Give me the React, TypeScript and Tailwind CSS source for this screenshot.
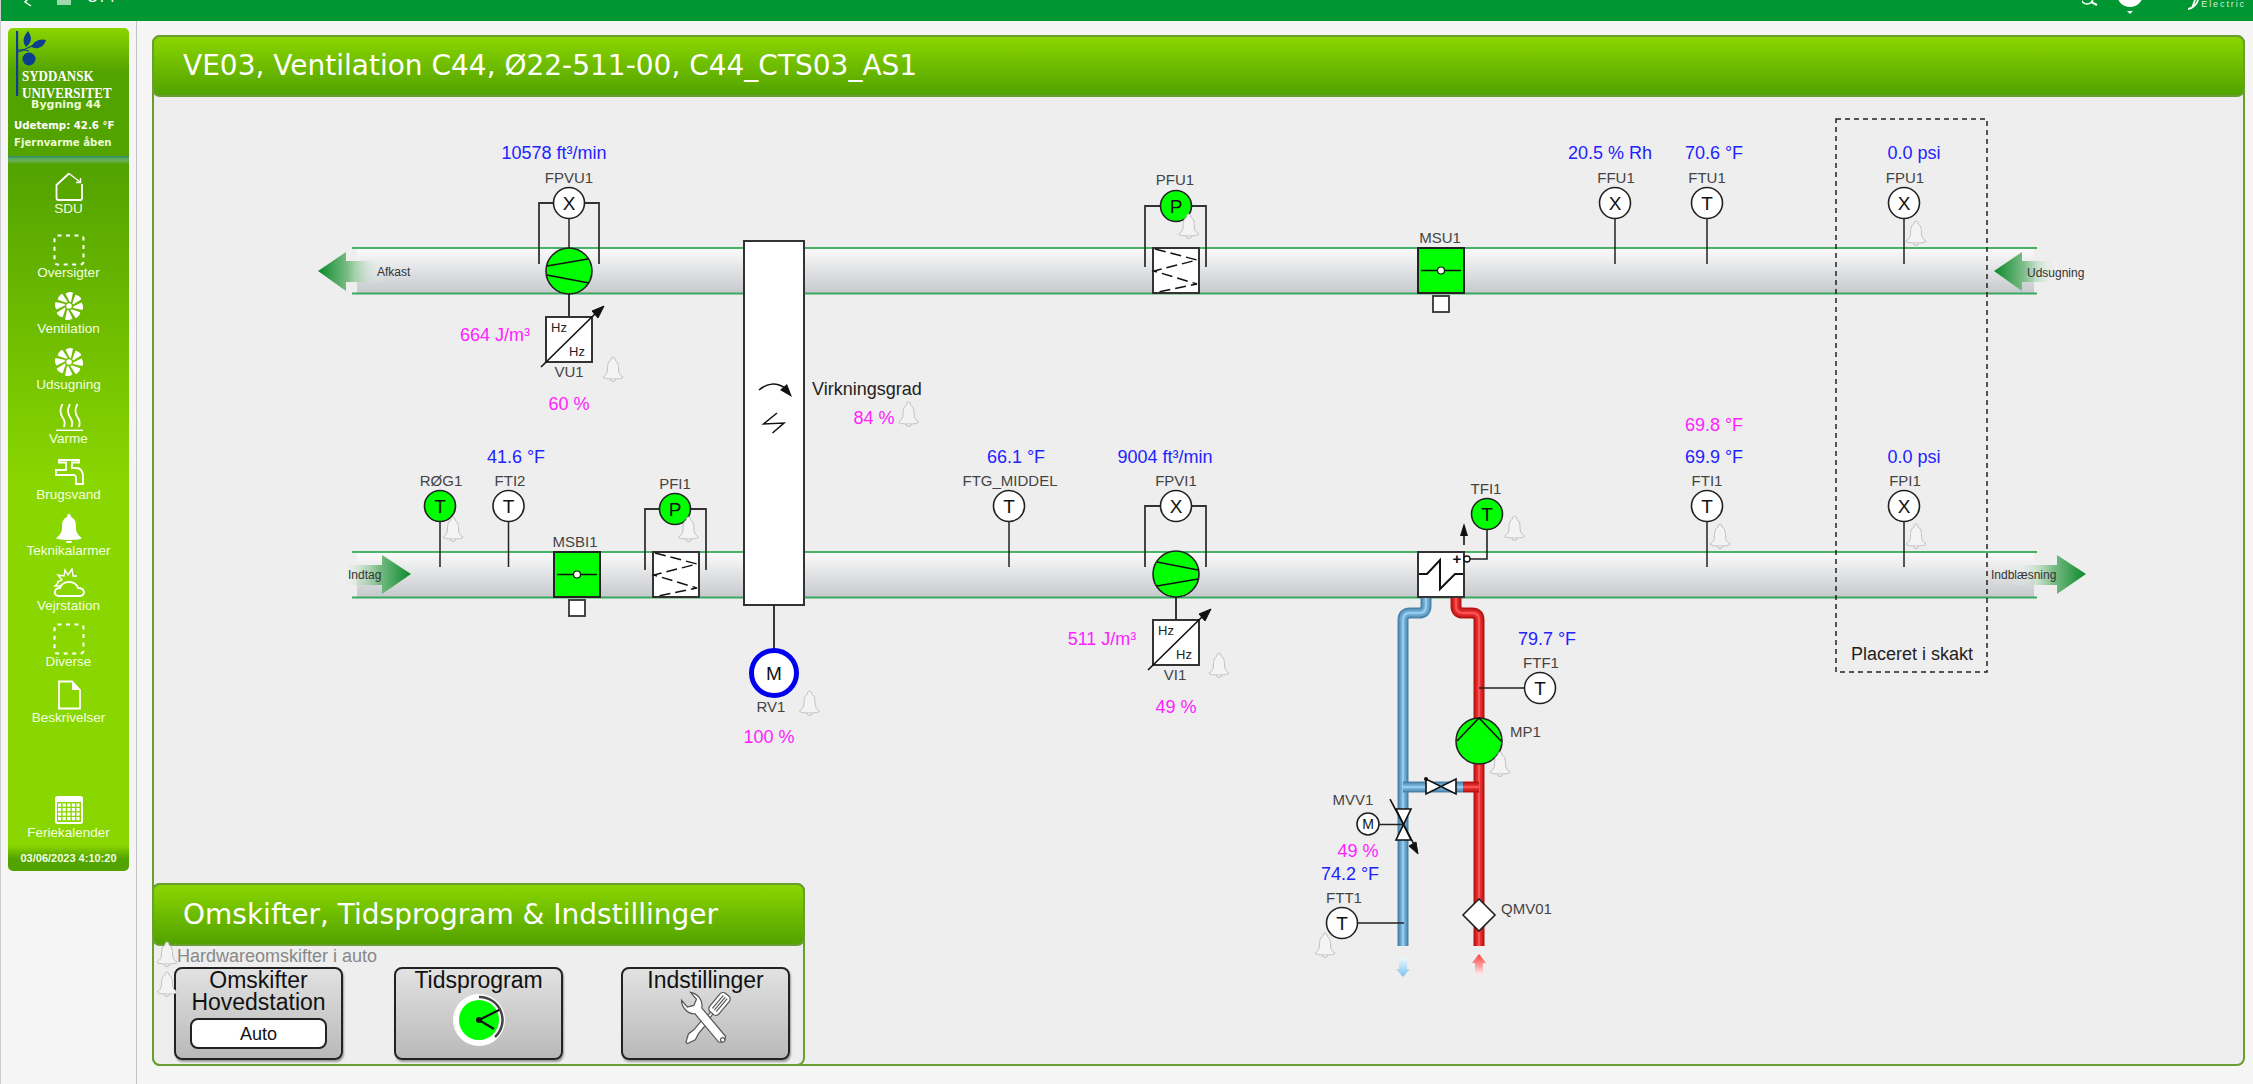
import React from "react";

const BLUE = "text-[18px] text-[#2222ff]";
const MAG = "text-[18px] text-[#ff22ff]";
const TAG = "text-[15px] text-[#444444]";
const BIG = "text-[18px] text-[#222222]";
const SYM = "text-[19px] text-[#111111]";
const HZ = "text-[13px] text-[#222222]";
const SMALL = "text-[12px] text-[#333333]";

type L = [string, number, number, string, ("l" | "c")?];
const labels: L[] = [
  ["10578 ft³/min", 554, 153, BLUE], ["FPVU1", 569, 178, TAG], ["X", 569, 203, SYM], ["664 J/m³", 495, 335, MAG],
  ["Hz", 559, 327, HZ], ["Hz", 577, 351, HZ], ["VU1", 569, 372, TAG], ["60 %", 569, 404, MAG], ["Afkast", 377, 272, SMALL, "l"],
  ["Virkningsgrad", 812, 389, BIG, "l"], ["84 %", 874, 418, MAG],
  ["41.6 °F", 516, 457, BLUE], ["RØG1", 441, 481, TAG], ["T", 440, 506, SYM], ["FTI2", 510, 481, TAG], ["T", 508.5, 506, SYM],
  ["PFI1", 675, 484, TAG], ["P", 675, 509, SYM], ["MSBI1", 575, 542, TAG], ["Indtag", 348, 575, SMALL, "l"],
  ["M", 774, 673, SYM], ["RV1", 771, 707, TAG], ["100 %", 769, 737, MAG],
  ["PFU1", 1175, 180, TAG], ["P", 1176, 206, SYM], ["MSU1", 1440, 238, TAG],
  ["20.5 % Rh", 1610, 153, BLUE], ["FFU1", 1616, 178, TAG], ["X", 1615, 203, SYM],
  ["70.6 °F", 1714, 153, BLUE], ["FTU1", 1707, 178, TAG], ["T", 1707, 203, SYM],
  ["0.0 psi", 1914, 153, BLUE], ["FPU1", 1905, 178, TAG], ["X", 1904, 203, SYM], ["Udsugning", 2027, 273, SMALL, "l"],
  ["66.1 °F", 1016, 457, BLUE], ["FTG_MIDDEL", 1010, 481, TAG], ["T", 1009, 506, SYM],
  ["9004 ft³/min", 1165, 457, BLUE], ["FPVI1", 1176, 481, TAG], ["X", 1176, 506, SYM], ["511 J/m³", 1102, 639, MAG],
  ["Hz", 1166, 630, HZ], ["Hz", 1184, 654, HZ], ["VI1", 1175, 675, TAG], ["49 %", 1176, 707, MAG],
  ["TFI1", 1486, 489, TAG], ["T", 1487, 514, SYM], ["+", 1457, 558, "text-[15px] font-bold text-[#111111]"],
  ["69.8 °F", 1714, 425, MAG], ["69.9 °F", 1714, 457, BLUE], ["FTI1", 1707, 481, TAG], ["T", 1707, 506, SYM],
  ["0.0 psi", 1914, 457, BLUE], ["FPI1", 1905, 481, TAG], ["X", 1904, 506, SYM], ["Indblæsning", 1991, 575, SMALL, "l"],
  ["Placeret i skakt", 1912, 654, BIG],
  ["79.7 °F", 1547, 639, BLUE], ["FTF1", 1541, 663, TAG], ["T", 1540, 688, SYM], ["MP1", 1510, 732, TAG, "l"],
  ["MVV1", 1353, 800, TAG], ["M", 1368, 824, "text-[14px] text-[#111111]"], ["49 %", 1358, 851, MAG], ["74.2 °F", 1350, 874, BLUE],
  ["FTT1", 1344, 898, TAG], ["T", 1342, 923, SYM], ["QMV01", 1501, 909, TAG, "l"],
];

const K = "#222222";

function Bell({ x, y }: { x: number; y: number }) {
  return (
    <g transform={`translate(${x} ${y})`}>
      <path d="M0 -12 C-1.5 -12 -2 -10.5 -2 -9 C-5.5 -7 -5.5 -3 -5.5 0 C-5.5 4 -7 6 -10 8 C-10 9.5 -5 10 0 10 C5 10 10 9.5 10 8 C7 6 5.5 4 5.5 0 C5.5 -3 5.5 -7 2 -9 C2 -10.5 1.5 -12 0 -12 Z" fill="#f3f3f3" stroke="#c0c0c0" strokeWidth="1" />
      <path d="M-2.5 10 A2.5 2.5 0 0 0 2.5 10" fill="#e8e8e8" stroke="#c0c0c0" strokeWidth="1" />
    </g>
  );
}

function Dot({ x, y, g, r = 15.5 }: { x: number; y: number; g?: boolean; r?: number }) {
  return <circle cx={x} cy={y} r={r} fill={g ? "#00ff00" : "#ffffff"} stroke={K} strokeWidth="1.6" />;
}

function Stem({ x, y, g }: { x: number; y: number; g?: boolean }) {
  return (
    <>
      <path d={`M${x} ${y} V${y + 61}`} stroke={K} strokeWidth="1.5" />
      <Dot x={x} y={y} g={g} />
    </>
  );
}

function Bracket({ x1, x2, y, b }: { x1: number; x2: number; y: number; b: number }) {
  return <path d={`M${x1} ${b} V${y} H${x2} V${b}`} fill="none" stroke="#333333" strokeWidth="1.8" />;
}

function Fan({ x, y, flip }: { x: number; y: number; flip?: boolean }) {
  return (
    <g transform={`translate(${x} ${y})`}>
      <circle r="23" fill="#00ff00" stroke={K} strokeWidth="1.6" />
      {flip ? (
        <path d="M-19 -12 L22 -4 M-19 12 L22 5" stroke="#111111" strokeWidth="1.6" fill="none" />
      ) : (
        <path d="M-22 -5 L19 -12 M-22 4 L20 12" stroke="#111111" strokeWidth="1.6" fill="none" />
      )}
    </g>
  );
}

function Vfd({ x, y }: { x: number; y: number }) {
  return (
    <g transform={`translate(${x} ${y})`}>
      <rect width="46" height="45" fill="#ffffff" stroke="#333333" strokeWidth="2" />
      <path d="M-5 50 L52 -6" stroke="#111111" strokeWidth="1.6" />
      <path d="M58 -11 L46 -6 L52 1 Z" fill="#111111" stroke="#111111" />
    </g>
  );
}

function Damper({ x, y }: { x: number; y: number }) {
  return (
    <g transform={`translate(${x} ${y})`}>
      <rect width="46" height="45" fill="#00ff00" stroke={K} strokeWidth="2" />
      <path d="M3 22.5 H43" stroke="#111111" strokeWidth="1.5" />
      <circle cx="23" cy="22.5" r="3.5" fill="#ffffff" stroke="#111111" strokeWidth="1.2" />
      <rect x="15" y="48" width="16" height="16" fill="#ffffff" stroke="#333333" strokeWidth="1.8" />
    </g>
  );
}

function FilterBox({ x, y }: { x: number; y: number }) {
  return (
    <g transform={`translate(${x} ${y})`}>
      <rect width="46" height="45" fill="#ffffff" stroke="#333333" strokeWidth="2" />
      <path d="M2 1 L44 12 L1 23 L44 36 L1 45" fill="none" stroke="#111111" strokeWidth="1.5" strokeDasharray="11 5" />
    </g>
  );
}

function Duct({ y }: { y: number }) {
  return (
    <>
      <rect x="357" y={y} width="1677" height="46" fill="url(#duct)" />
      <path d={`M352 ${y} H2037`} stroke="#0f9d3a" strokeWidth="1.6" />
      <path d={`M352 ${y + 45.5} H2037`} stroke="#3aa860" strokeWidth="1.8" />
    </>
  );
}

function Pipe({ d, c }: { d: string; c: "b" | "r" }) {
  const [a, m, i] = c === "b" ? ["#4a84aa", "#6aa6cf", "#96ccee"] : ["#b81414", "#dc2626", "#fa5252"];
  return (
    <g fill="none" strokeLinejoin="round">
      <path d={d} stroke={a} strokeWidth="11" />
      <path d={d} stroke={m} strokeWidth="7" />
      <path d={d} stroke={i} strokeWidth="2.5" />
    </g>
  );
}

function Diagram() {
  return (
    <div className="absolute left-[-154px] top-[-37px] w-[2253px] h-[1084px] font-['Liberation_Sans',Arial,sans-serif]">
      <svg width="2253" height="1084" className="absolute left-0 top-0">
        <defs>
          <linearGradient id="duct" x1="0" y1="0" x2="0" y2="1">
            <stop offset="0" stopColor="#fbfbfb" />
            <stop offset="1" stopColor="#c5c8cc" />
          </linearGradient>
          <linearGradient id="a1" gradientUnits="userSpaceOnUse" x1="318" y1="0" x2="385" y2="0">
            <stop offset="0" stopColor="#0a8a2a" />
            <stop offset="0.45" stopColor="#7dbd88" />
            <stop offset="1" stopColor="#ffffff" stopOpacity="0" />
          </linearGradient>
          <linearGradient id="a2" gradientUnits="userSpaceOnUse" x1="1994" y1="0" x2="2060" y2="0">
            <stop offset="0" stopColor="#0a8a2a" />
            <stop offset="0.45" stopColor="#7dbd88" />
            <stop offset="1" stopColor="#ffffff" stopOpacity="0" />
          </linearGradient>
          <linearGradient id="a3" gradientUnits="userSpaceOnUse" x1="411" y1="0" x2="338" y2="0">
            <stop offset="0" stopColor="#0a8a2a" />
            <stop offset="0.45" stopColor="#7dbd88" />
            <stop offset="1" stopColor="#ffffff" stopOpacity="0" />
          </linearGradient>
          <linearGradient id="a4" gradientUnits="userSpaceOnUse" x1="2086" y1="0" x2="2012" y2="0">
            <stop offset="0" stopColor="#0a8a2a" />
            <stop offset="0.45" stopColor="#7dbd88" />
            <stop offset="1" stopColor="#ffffff" stopOpacity="0" />
          </linearGradient>
          <linearGradient id="ab" x1="0" y1="0" x2="0" y2="1">
            <stop offset="0" stopColor="#eef7fd" />
            <stop offset="1" stopColor="#7cc4ee" />
          </linearGradient>
          <linearGradient id="ar" x1="0" y1="0" x2="0" y2="1">
            <stop offset="0" stopColor="#ff3b3b" />
            <stop offset="1" stopColor="#ffe6e6" />
          </linearGradient>
        </defs>

        <Duct y={248} />
        <Duct y={552} />

        <path d="M318 271 L346 252 V261 H385 V282 H346 V291 Z" fill="url(#a1)" />
        <path d="M1994 271 L2022 252 V261 H2060 V282 H2022 V291 Z" fill="url(#a2)" />
        <path d="M411 574 L382 555 V565 H338 V585 H382 V594 Z" fill="url(#a3)" />
        <path d="M2086 574 L2057 555 V565 H2012 V585 H2057 V594 Z" fill="url(#a4)" />

        <Bracket x1={539} x2={599} y={203} b={264} />
        <Stem x={569} y={203} />
        <path d="M569 294 V317" stroke={K} strokeWidth="1.8" />
        <Fan x={569} y={271} />
        <Vfd x={546} y={317} />
        <Bell x={613} y={369} />

        <rect x="744" y="241" width="60" height="364" fill="#ffffff" stroke="#333333" strokeWidth="2" />
        <path d="M759 390 Q772 379 785 388" fill="none" stroke="#111111" strokeWidth="1.6" />
        <path d="M792 397 L780 390 L787 384 Z" fill="#111111" />
        <path d="M777 413 L763.5 424 L784 423 L772.5 433" fill="none" stroke="#111111" strokeWidth="1.5" />
        <path d="M774 605 V650" stroke={K} strokeWidth="1.8" />
        <circle cx="774" cy="673" r="22.5" fill="#ffffff" stroke="#0000ee" strokeWidth="5" />
        <Bell x={908.6} y={414} />
        <Bell x={809.5} y={703} />

        <Stem x={440} y={506} g />
        <Stem x={508.5} y={506} />
        <Bell x={453} y={529} />
        <Damper x={554} y={552} />
        <Bracket x1={645} x2={706} y={509} b={570} />
        <FilterBox x={653} y={552} />
        <Dot x={675} y={509} g />
        <Bell x={688.5} y={529} />

        <Bracket x1={1145} x2={1206} y={206} b={267} />
        <FilterBox x={1153} y={248} />
        <Dot x={1176} y={206} g />
        <Bell x={1188.7} y={226} />
        <Damper x={1418} y={248} />
        <Stem x={1615} y={203} />
        <Stem x={1707} y={203} />
        <Stem x={1904} y={203} />
        <Bell x={1916} y={233} />

        <Stem x={1009} y={506} />
        <Bracket x1={1145} x2={1206} y={506} b={567} />
        <Dot x={1176} y={506} />
        <path d="M1176 597 V620" stroke={K} strokeWidth="1.8" />
        <Fan x={1176} y={574} flip />
        <Vfd x={1153} y={620} />
        <Bell x={1219} y={665} />

        <Stem x={1707} y={506} />
        <Bell x={1720} y={536} />
        <Stem x={1904} y={506} />
        <Bell x={1916} y={536} />

        <rect x="1836" y="119" width="151" height="553" fill="none" stroke="#222222" strokeWidth="1.5" strokeDasharray="5 4" />

        <Pipe d="M1426 597 V606 Q1426 613 1419 613 H1410 Q1403 613 1403 620 V946" c="b" />
        <Pipe d="M1403 787 H1463" c="b" />
        <Pipe d="M1456 597 V606 Q1456 613 1463 613 H1472 Q1479 613 1479 620 V946" c="r" />
        <Pipe d="M1463 787 H1479" c="r" />

        <rect x="1418" y="552" width="46" height="45" fill="#ffffff" stroke="#333333" strokeWidth="2" />
        <path d="M1419 574 H1427 L1440 560 V589 L1455 574 H1463" fill="none" stroke="#111111" strokeWidth="2" />
        <path d="M1464 545 V533" stroke="#111111" strokeWidth="1.6" />
        <path d="M1464 523 L1460 536 H1468 Z" fill="#111111" />
        <path d="M1470 559 H1487 V529" fill="none" stroke={K} strokeWidth="1.6" />
        <circle cx="1467" cy="559" r="3" fill="#ffffff" stroke="#111111" strokeWidth="1.3" />
        <Dot x={1487} y={514} g />
        <Bell x={1514.5} y={528} />

        <path d="M1479 688 H1525" stroke={K} strokeWidth="1.5" />
        <Dot x={1540} y={688} />
        <circle cx="1479" cy="741" r="23" fill="#00ff00" stroke={K} strokeWidth="1.6" />
        <path d="M1457 741 L1479 718 L1501 741" fill="none" stroke="#111111" strokeWidth="1.6" />
        <Bell x={1500} y={764} />

        <path d="M1426 779 V794 L1456 779 V794 Z" fill="#ffffff" stroke="#111111" strokeWidth="1.6" />
        <circle cx="1426" cy="779" r="2" fill="#111111" />

        <path d="M1396 809 H1411 L1396 840 H1411 Z" fill="#ffffff" stroke="#111111" strokeWidth="1.6" />
        <path d="M1379 824.5 H1403" stroke={K} strokeWidth="1.5" />
        <circle cx="1368" cy="824" r="11" fill="#ffffff" stroke={K} strokeWidth="1.6" />
        <path d="M1390 799 L1416 848" stroke="#111111" strokeWidth="1.6" />
        <path d="M1418 854 L1409 846 L1416 842 Z" fill="#111111" stroke="#111111" />

        <path d="M1358 923 H1404" stroke={K} strokeWidth="1.5" />
        <Dot x={1342} y={923} />
        <Bell x={1325} y={945} />

        <path d="M1479 899 L1495 915 L1479 931 L1463 915 Z" fill="#ffffff" stroke={K} strokeWidth="1.6" />

        <path d="M1399 958 H1407 V969 H1410 L1403 977 L1396 969 H1399 Z" fill="url(#ab)" />
        <path d="M1479 954 L1486 963 H1483 V974 H1475 V963 H1472 Z" fill="url(#ar)" />
      </svg>
      {labels.map(([t, x, y, cls, a], i) => (
        <span
          key={i}
          className={`absolute leading-none whitespace-nowrap -translate-y-1/2 ${a === "l" ? "" : "-translate-x-1/2"} ${cls}`}
          style={{ left: x, top: cls === TAG ? y - 1 : y }}
        >
          {t}
        </span>
      ))}
    </div>
  );
}

const S = { fill: "none", stroke: "#ffffff", strokeWidth: 1.8 };

function Pinwheel() {
  return (
    <svg width="30" height="30" viewBox="0 0 30 30">
      {[0, 45, 90, 135, 180, 225, 270, 315].map((r) => (
        <path key={r} d="M15.5 10.8 L11.5 2.5 Q15 0 19 1.5 L17 11 Z" fill="#ffffff" transform={`rotate(${r} 15 15)`} />
      ))}
      <circle cx="15" cy="15" r="2.8" fill="#ffffff" />
    </svg>
  );
}

function Dashed() {
  return (
    <svg width="32" height="32" viewBox="0 0 32 32">
      <rect x="1.5" y="1.5" width="29" height="29" rx="3" fill="none" stroke="#ffffff" strokeWidth="2" strokeDasharray="4 4.5" />
    </svg>
  );
}

const navIcons: Record<string, React.ReactNode> = {
  SDU: (
    <svg width="30" height="30" viewBox="0 0 30 30">
      <path d="M15 2.5 L2.5 14 V27 Q2.5 29 4.5 29 H26.5 Q28 29 28 27 V13" {...S} />
      <path d="M15 2.5 L26 11 M26.5 7 V11.5 H22" {...S} strokeWidth={1.4} />
    </svg>
  ),
  Oversigter: <Dashed />,
  Ventilation: <Pinwheel />,
  Udsugning: <Pinwheel />,
  Varme: (
    <svg width="30" height="30" viewBox="0 0 30 30">
      <path d="M8.5 3 C5 9 6 13 9 17 C11 20 11 23 10 26 M16 3 C12.5 9 13.5 13 16.5 17 C18.5 20 18.5 23 17.5 26 M23.5 3 C20 9 21 13 24 17 C26 20 26 23 25 26" {...S} />
      <path d="M2 29.5 H29" {...S} />
    </svg>
  ),
  Brugsvand: (
    <svg width="30" height="30" viewBox="0 0 30 30">
      <path d="M5 3 H25 V5.5 H18 V11 H22 Q29 11 29 20 V27 H22 V21 Q22 18 19 18 H2 V13 H12 V5.5 H5 Z" {...S} />
    </svg>
  ),
  Teknikalarmer: (
    <svg width="30" height="30" viewBox="0 0 30 30">
      <path d="M15 1 C13.5 1 13 2.5 13 4 C8 6 8 11 8 15 C8 20 5 23 2 25 C2 26 8 27 15 27 C22 27 28 26 28 25 C25 23 22 20 22 15 C22 11 22 6 17 4 C17 2.5 16.5 1 15 1 Z" fill="#ffffff" />
      <path d="M12 28 A3 2.5 0 0 0 18 28 Z" fill="#ffffff" />
    </svg>
  ),
  Vejrstation: (
    <svg width="32" height="30" viewBox="0 0 32 30">
      <path d="M5 28 Q1 27 2 23 Q3 20 7 20 Q9 14 16 14 Q23 14 25 20 Q31 20 31 25 Q30 28 27 28 Z" {...S} />
      <path d="M4 14 L9 12 L5 7 L11 8 L12 2 L15 7 L19 1 L20 8 L24 8 M8 18 L2 18 L6 14" {...S} strokeWidth={1.4} />
    </svg>
  ),
  Diverse: <Dashed />,
  Beskrivelser: (
    <svg width="30" height="30" viewBox="0 0 30 30">
      <path d="M5 1.5 H18 L26 10 V28.5 H5 Z" {...S} />
      <path d="M18 1.5 V10 H26 Z" fill="#ffffff" />
    </svg>
  ),
  Feriekalender: (
    <svg width="30" height="30" viewBox="0 0 30 30">
      <rect x="1" y="1" width="28" height="28" rx="2.5" fill="#ffffff" />
      <rect x="3" y="7" width="24" height="20" fill="#8ad600" />
      {[0, 1, 2, 3].map((r) =>
        [0, 1, 2, 3, 4].map((c) => (
          <rect key={`${r}${c}`} x={4 + c * 4.6} y={8.5 + r * 4.5} width="3.2" height="3.2" fill="#ffffff" />
        ))
      )}
    </svg>
  ),
};

function NavItem({ name, extra = "" }: { name: string; extra?: string }) {
  return (
    <div className={`flex flex-col items-center h-[46px] ${extra}`}>
      <div className="h-[30px] flex items-center justify-center">{navIcons[name]}</div>
      <div className="text-[13.5px] leading-[16px] text-[#f2ffe0] whitespace-nowrap">{name}</div>
    </div>
  );
}

function Sidebar() {
  return (
    <div className="w-[121px] h-[843px] flex flex-col rounded-[5px] overflow-hidden font-['Liberation_Sans',Arial,sans-serif]">
      <div className="relative h-[128px] bg-linear-to-b from-[#8ad600] to-[#52a200] to-[35%] shrink-0">
        <svg width="50" height="70" viewBox="0 0 50 70" className="absolute left-[6px] top-[2px]">
          <rect x="2" y="1" width="2.2" height="65" fill="#0b3d91" />
          <path d="M4 22 C10 20 16 17 24 13" stroke="#0b3d91" strokeWidth="1.2" fill="none" />
          <path d="M14 1 C9 7 8 12 12 17 C17 13 19 8 14 1 Z" fill="#0b3d91" />
          <path d="M32 10 C26 8 20 11 17 17 C24 20 30 17 32 10 Z" fill="#0b3d91" />
          <path d="M4 20 C10 19 14 21 15 21" stroke="#0b3d91" strokeWidth="1.2" fill="none" />
          <circle cx="15" cy="29" r="6.5" fill="#0b3d91" />
        </svg>
        <div className="absolute left-[14px] top-[39px] font-['Liberation_Serif',serif] font-bold text-[13px] leading-[17px] text-white whitespace-nowrap">
          <div className="scale-y-115 origin-left">SYDDANSK</div>
          <div className="scale-y-115 origin-left">UNIVERSITET</div>
        </div>
        <div className="absolute left-[23px] top-[70px] font-['DejaVu_Sans',sans-serif] font-bold text-[11px] leading-[13px] text-[#eafbd2] whitespace-nowrap">Bygning 44</div>
        <div className="absolute left-[6px] top-[91px] font-['DejaVu_Sans',sans-serif] font-bold text-[10.2px] leading-[14px] text-white whitespace-nowrap">Udetemp: 42.6 °F</div>
        <div className="absolute left-[6px] top-[108px] font-['DejaVu_Sans',sans-serif] font-bold text-[10.2px] leading-[14px] text-[#eafbd2] whitespace-nowrap">Fjernvarme åben</div>
      </div>
      <div className="h-[8px] shrink-0 bg-linear-to-b from-[#2b8a60] via-[#6db25a] to-[#52a200]" />
      <div className="flex-1 flex flex-col gap-[10px] pt-[7px] bg-linear-to-b from-[#52a200] to-[#8ad600] to-[47%]">
        <NavItem name="SDU" />
        <NavItem name="Oversigter" extra="mt-[8px]" />
        <NavItem name="Ventilation" />
        <NavItem name="Udsugning" />
        <NavItem name="Varme" extra="-mt-[2px]" />
        <NavItem name="Brugsvand" />
        <NavItem name="Teknikalarmer" />
        <NavItem name="Vejrstation" extra="-mt-[1px]" />
        <NavItem name="Diverse" />
        <NavItem name="Beskrivelser" />
        <NavItem name="Feriekalender" extra="mt-[59px]" />
      </div>
      <div className="h-[26px] shrink-0 flex items-center justify-center bg-linear-to-b from-[#8ad600] to-[#52a200] to-[55%] text-[11px] font-bold text-[#f2ffe0] whitespace-nowrap">
        03/06/2023 4:10:20
      </div>
    </div>
  );
}

function ClockIcon() {
  return (
    <svg width="56" height="56" viewBox="0 0 56 56">
      <circle cx="28" cy="28" r="26" fill="#ffffff" />
      <circle cx="28" cy="28" r="20" fill="#00ff00" />
      <path d="M28 5 A23 23 0 0 1 44 45" fill="none" stroke="#444444" strokeWidth="2.5" />
      <path d="M48 18 L28 28 L43 37" fill="none" stroke="#111111" strokeWidth="2.2" />
      <circle cx="28" cy="28" r="3" fill="#111111" />
    </svg>
  );
}

function ToolsIcon() {
  return (
    <svg width="60" height="60" viewBox="-30 -30 60 60">
      <g transform="rotate(40)" fill="#ffffff" stroke="#555555" strokeWidth="1.2">
        <path d="M-1.5 -11 V2 H-3 V15 L-4.5 22 L-1 30 L1 30 L4.5 22 L3 15 V2 H1.5 V-11 Z" />
        <rect x="-6" y="-33" width="12" height="24" rx="4" />
        <path d="M-2.5 -30 V-13 M0 -30 V-13 M2.5 -30 V-13" fill="none" />
      </g>
      <g transform="rotate(-40)" fill="#ffffff" stroke="#555555" strokeWidth="1.2">
        <path d="M-4.5 -12 C-10 -16 -11 -25 -6 -31 V-22 L0 -19 L6 -22 V-31 C11 -25 10 -16 4.5 -12 V25 A5.5 5.5 0 0 1 -4.5 25 Z" />
        <circle cx="0" cy="26" r="2.2" />
      </g>
    </svg>
  );
}

function PanelButton({ children, extra = "" }: { children: React.ReactNode; extra?: string }) {
  return (
    <div className={`w-[169px] h-[93px] shrink-0 rounded-[8px] border-2 border-[#222222] bg-linear-to-b from-[#e2e2e2] to-[#b9b9b9] shadow-[1px_2px_2px_rgba(0,0,0,0.35)] flex flex-col items-center text-[23px] leading-[22px] text-[#111111] ${extra}`}>
      {children}
    </div>
  );
}

function SmallBell({ extra }: { extra: string }) {
  return (
    <svg width="24" height="26" viewBox="-12 -13 24 26" className={`absolute ${extra}`}>
      <Bell x={0} y={0} />
    </svg>
  );
}

function BottomPanel() {
  return (
    <div className="absolute left-[-2px] bottom-[-2px] w-[653px] h-[183px] rounded-[8px] border-2 border-[#6a9e30] bg-[#eeeeee] font-['Liberation_Sans',Arial,sans-serif]">
      <div className="h-[63px] -mx-[2px] -mt-[2px] rounded-[8px] border-2 border-[#6a9e30] bg-linear-to-b from-[#8ad600] to-[#52a200] flex items-center pl-[29px]">
        <span className="font-['DejaVu_Sans',sans-serif] text-[28px] text-white whitespace-nowrap">Omskifter, Tidsprogram &amp; Indstillinger</span>
      </div>
      <SmallBell extra="left-[1px] top-[56px]" />
      <SmallBell extra="left-[1px] top-[86px]" />
      <div className="pl-[23px] text-[18px] leading-[20px] text-[#888888] whitespace-nowrap">Hardwareomskifter i auto</div>
      <div className="flex pl-[20px] mt-[1px]">
        <PanelButton>
          <div>Omskifter</div>
          <div>Hovedstation</div>
          <div className="mt-[5px] w-[137px] h-[31px] rounded-[8px] border-2 border-[#222222] bg-white flex items-center justify-center text-[18px]">Auto</div>
        </PanelButton>
        <PanelButton extra="ml-[51px]">
          <div>Tidsprogram</div>
          <div className="mt-[1px]"><ClockIcon /></div>
        </PanelButton>
        <PanelButton extra="ml-[58px]">
          <div>Indstillinger</div>
          <div className="-mt-[1px]"><ToolsIcon /></div>
        </PanelButton>
      </div>
    </div>
  );
}

function TopBar() {
  return (
    <div className="h-[21px] shrink-0 bg-[#009632] overflow-hidden flex items-start justify-between font-['Liberation_Sans',Arial,sans-serif]">
      <div className="flex items-start">
        <svg width="12" height="10" viewBox="0 0 12 10" className="ml-[22px]">
          <path d="M8 -4 L2 2 L8 6" fill="none" stroke="#ffffff" strokeWidth="1.5" />
        </svg>
        <div className="ml-[22px] w-[14px] h-[5px] bg-[#9fd8b0]" />
        <div className="ml-[16px] -mt-[10px] text-[14px] tracking-[2px] leading-[14px] text-white">OFF</div>
      </div>
      <div className="flex items-start">
        <svg width="18" height="8" viewBox="0 0 18 8">
          <circle cx="5" cy="-2" r="6" fill="none" stroke="#ffffff" strokeWidth="1.6" />
          <path d="M9 2 L15 5" stroke="#ffffff" strokeWidth="2" />
        </svg>
        <svg width="30" height="16" viewBox="0 0 30 16" className="ml-[15px]">
          <circle cx="15" cy="-6" r="13" fill="#ffffff" />
          <path d="M12 11 H18 L15 14 Z" fill="#ffffff" />
        </svg>
        <svg width="14" height="10" viewBox="0 0 14 10" className="ml-[41px]">
          <path d="M2 9 C6 9 11 4 12 0 M6 8 L9 0" fill="none" stroke="#ffffff" strokeWidth="1.8" />
        </svg>
        <div className="mr-[7px] ml-[1px] -mt-[1px] text-[9px] tracking-[1.9px] leading-[10px] text-[#d6f0dc]">Electric</div>
      </div>
    </div>
  );
}

export default function App() {
  return (
    <div className="w-[2253px] h-[1084px] flex flex-col overflow-hidden bg-[#f5f5f5] border-l border-[#cccccc]">
      <TopBar />
      <div className="flex-1 flex min-h-0">
        <div className="w-[136px] shrink-0 border-r border-[#c4c4c4] pl-[7px] pt-[7px]">
          <Sidebar />
        </div>
        <div className="flex-1 pl-[15px] pt-[14px] pr-[8px] pb-[18px] min-w-0">
          <div className="relative h-full rounded-[8px] border-2 border-[#6a9e30] bg-[#eeeeee]">
            <div className="h-[62px] -mx-[2px] -mt-[2px] rounded-[8px] border-2 border-[#6a9e30] bg-linear-to-b from-[#8ad600] to-[#52a200] flex items-center pl-[29px]">
              <span className="font-['DejaVu_Sans',sans-serif] text-[28px] text-white whitespace-nowrap">VE03, Ventilation C44, Ø22-511-00, C44_CTS03_AS1</span>
            </div>
            <Diagram />
            <BottomPanel />
          </div>
        </div>
      </div>
    </div>
  );
}
